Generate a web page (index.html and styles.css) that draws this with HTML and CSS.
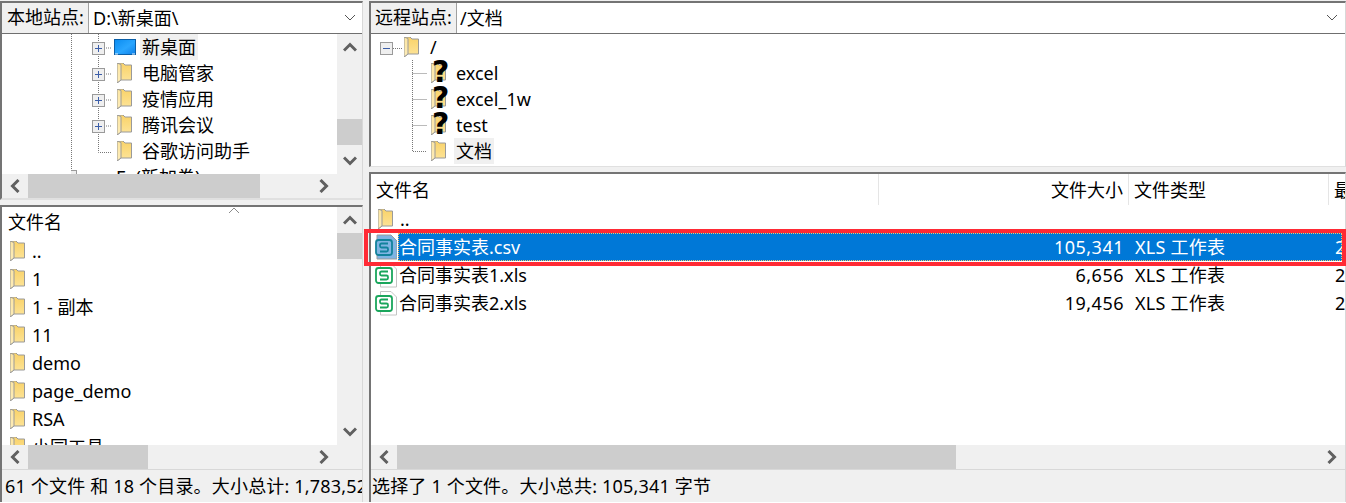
FILE: index.html
```html
<!DOCTYPE html>
<html lang="zh-CN">
  <head>
    <meta charset="UTF-8" />
    <title>FileZilla</title>
    <link rel="stylesheet" href="styles.css">
  </head>
  <body>
    <svg class="sprite" aria-hidden="true">
      <defs>
        <linearGradient id="folder-fill" x1="0" y1="0" x2="0" y2="1">
          <stop offset="0" stop-color="#f9d268" />
          <stop offset="1" stop-color="#fde59c" />
        </linearGradient>
        <linearGradient id="folder-front" x1="0" y1="0" x2="0" y2="1">
          <stop offset="0" stop-color="#fde6a2" />
          <stop offset="1" stop-color="#fdecb8" />
        </linearGradient>
        <linearGradient id="desk-fill" x1="0" y1="0" x2="1" y2="1">
          <stop offset="0" stop-color="#0a8cf0" />
          <stop offset="0.55" stop-color="#2aa6ff" />
          <stop offset="1" stop-color="#0f80e8" />
        </linearGradient>
        <symbol id="folder" viewBox="0 0 15 20">
          <path d="M0 0H6L8 2H14.500V17H4L0 20Z" fill="url(#folder-fill)" />
          <path d="M0 0L4 1.500V17L0 20Z" fill="url(#folder-front)" />
        </symbol>
        <symbol id="desktop" viewBox="0 0 22 16">
          <rect x="0.500" y="0.500" width="21" height="15" fill="url(#desk-fill)" stroke="#0b5fa8" />
          <path d="M1 15H4M18 15H21" stroke="#dff1ff" />
        </symbol>
        <symbol id="chevron" viewBox="0 0 14 10">
          <polyline points="1,8.500 7,2.500 13,8.500" fill="none" stroke="#606060" stroke-width="3" />
        </symbol>
        <symbol id="sheet" viewBox="0 0 22 26">
          <path d="M5.500 1.500H16L21.500 7V25H5.500Z" fill="#fff" stroke="#c4c4c4" />
          <rect x="1" y="6" width="16" height="15" rx="2.500" fill="#fff" stroke="#1aa65c" stroke-width="1.800" />
          <path d="M13 9.500H6.500Q5 9.500 5 11V12Q5 13.500 6.500 13.500H11.500Q13 13.500 13 15V16Q13 17.500 11.500 17.500H5" fill="none" stroke="#1aa65c" stroke-width="1.800" />
        </symbol>
        <symbol id="sheet-selected" viewBox="0 0 22 26">
          <path d="M2 1H16L22 7V25H2Z" fill="#7fb4e2" />
          <rect x="1" y="6" width="16" height="15" rx="2.500" fill="#7fb4e2" stroke="#12829c" stroke-width="1.800" />
          <path d="M13 9.500H6.500Q5 9.500 5 11V12Q5 13.500 6.500 13.500H11.500Q13 13.500 13 15V16Q13 17.500 11.500 17.500H5" fill="none" stroke="#12829c" stroke-width="1.800" />
        </symbol>
        <symbol id="twig-open" viewBox="0 0 41 26">
          <path class="dots" d="M0.500 0V26M27.500 0V26M33 14H41" />
          <rect class="box" x="21.500" y="8.500" width="12" height="12" />
          <path class="cross" d="M24 14.500H31M27.500 11V18" />
        </symbol>
        <symbol id="twig-last" viewBox="0 0 41 26">
          <path class="dots" d="M0.500 0V26M27.500 0V14.500H41" />
        </symbol>
        <symbol id="twig-drive" viewBox="0 0 41 26">
          <path class="dots" d="M0.500 0V6" />
          <rect class="box" x="-6.500" y="6.500" width="12" height="12" />
        </symbol>
        <symbol id="twig-root" viewBox="0 0 32 26">
          <rect class="box" x="8.500" y="8.500" width="12" height="12" />
          <path class="cross" d="M11 14.500H18" />
          <path class="dots" d="M21 14.500H31" />
        </symbol>
        <symbol id="twig-child" viewBox="0 0 15 26">
          <path class="dots" d="M0.500 0V26M0.500 13.500H15" />
        </symbol>
        <symbol id="twig-end" viewBox="0 0 15 26">
          <path class="dots" d="M0.500 0V13.500H15" />
        </symbol>
      </defs>
    </svg>

    <div class="app">
      <div class="pane pane-left">
        <div class="box box-tree">
          <div class="site-bar">
            <span class="site-label">本地站点:</span>
            <span class="site-path">D:\新桌面\</span>
            <svg class="combo-arrow" viewBox="0 0 12 8"><polyline points="1,1 6,6 11,1" /></svg>
          </div>
          <div class="scroll-view">
            <div class="content tree tree-local">
              <div class="tree-row">
                <svg class="twig"><use href="#twig-open" /></svg>
                <svg class="desk-icon"><use href="#desktop" /></svg>
                <span class="tree-label current">新桌面</span>
              </div>
              <div class="tree-row">
                <svg class="twig"><use href="#twig-open" /></svg>
                <svg class="folder"><use href="#folder" /></svg>
                <span class="tree-label">电脑管家</span>
              </div>
              <div class="tree-row">
                <svg class="twig"><use href="#twig-open" /></svg>
                <svg class="folder"><use href="#folder" /></svg>
                <span class="tree-label">疫情应用</span>
              </div>
              <div class="tree-row">
                <svg class="twig"><use href="#twig-open" /></svg>
                <svg class="folder"><use href="#folder" /></svg>
                <span class="tree-label">腾讯会议</span>
              </div>
              <div class="tree-row">
                <svg class="twig"><use href="#twig-last" /></svg>
                <svg class="folder"><use href="#folder" /></svg>
                <span class="tree-label">谷歌访问助手</span>
              </div>
              <div class="tree-row">
                <svg class="twig"><use href="#twig-drive" /></svg>
                <span class="drive-label">E: (新加卷)</span>
              </div>
            </div>
            <div class="vbar">
              <span class="sb-btn"><svg class="chev"><use href="#chevron" /></svg></span>
              <span class="vtrack vtrack-tree"><span class="vthumb"></span></span>
              <span class="sb-btn"><svg class="chev down"><use href="#chevron" /></svg></span>
            </div>
            <div class="hbar">
              <span class="sb-btn"><svg class="chev left"><use href="#chevron" /></svg></span>
              <span class="hthumb hthumb-tree"></span>
              <span class="hspace"></span>
              <span class="sb-btn"><svg class="chev right"><use href="#chevron" /></svg></span>
            </div>
            <div class="corner"></div>
          </div>
        </div>

        <div class="box box-list">
          <div class="scroll-view">
            <div class="content">
              <div class="local-head">
                文件名
                <svg class="sort-mark" viewBox="0 0 12 7"><polyline points="1,6 6,1 11,6" /></svg>
              </div>
              <div class="local-row"><svg class="folder"><use href="#folder" /></svg><span>..</span></div>
              <div class="local-row"><svg class="folder"><use href="#folder" /></svg><span>1</span></div>
              <div class="local-row"><svg class="folder"><use href="#folder" /></svg><span>1 - 副本</span></div>
              <div class="local-row"><svg class="folder"><use href="#folder" /></svg><span>11</span></div>
              <div class="local-row"><svg class="folder"><use href="#folder" /></svg><span>demo</span></div>
              <div class="local-row"><svg class="folder"><use href="#folder" /></svg><span>page_demo</span></div>
              <div class="local-row"><svg class="folder"><use href="#folder" /></svg><span>RSA</span></div>
              <div class="local-row"><svg class="folder"><use href="#folder" /></svg><span>小园工具</span></div>
            </div>
            <div class="vbar">
              <span class="sb-btn"><svg class="chev"><use href="#chevron" /></svg></span>
              <span class="vtrack"><span class="vthumb"></span></span>
              <span class="sb-btn"><svg class="chev down"><use href="#chevron" /></svg></span>
            </div>
            <div class="hbar">
              <span class="sb-btn"><svg class="chev left"><use href="#chevron" /></svg></span>
              <span class="hthumb hthumb-list"></span>
              <span class="hspace"></span>
              <span class="sb-btn"><svg class="chev right"><use href="#chevron" /></svg></span>
            </div>
            <div class="corner"></div>
          </div>
          <div class="status">61 个文件 和 18 个目录。大小总计: 1,783,524 字节</div>
        </div>
      </div>

      <div class="pane pane-right">
        <div class="box box-tree">
          <div class="site-bar">
            <span class="site-label">远程站点:</span>
            <span class="site-path">/文档</span>
            <svg class="combo-arrow" viewBox="0 0 12 8"><polyline points="1,1 6,6 11,1" /></svg>
          </div>
          <div class="tree tree-remote">
            <div class="tree-row">
              <svg class="twig-root"><use href="#twig-root" /></svg>
              <svg class="folder"><use href="#folder" /></svg>
              <span class="root-name">/</span>
            </div>
            <div class="tree-row child">
              <svg class="twig-child"><use href="#twig-child" /></svg>
              <span class="unknown"><svg class="folder"><use href="#folder" /></svg><b class="mark-q">?</b></span>
              <span class="tree-label">excel</span>
            </div>
            <div class="tree-row child">
              <svg class="twig-child"><use href="#twig-child" /></svg>
              <span class="unknown"><svg class="folder"><use href="#folder" /></svg><b class="mark-q">?</b></span>
              <span class="tree-label">excel_1w</span>
            </div>
            <div class="tree-row child">
              <svg class="twig-child"><use href="#twig-child" /></svg>
              <span class="unknown"><svg class="folder"><use href="#folder" /></svg><b class="mark-q">?</b></span>
              <span class="tree-label">test</span>
            </div>
            <div class="tree-row child">
              <svg class="twig-child"><use href="#twig-end" /></svg>
              <span class="unknown"><svg class="folder"><use href="#folder" /></svg></span>
              <span class="tree-label current">文档</span>
            </div>
          </div>
        </div>

        <div class="box box-list">
          <div class="remote-list">
            <div class="remote-head">
              <span class="col">文件名</span>
              <span class="col num">文件大小</span>
              <span class="col">文件类型</span>
              <span class="col last">最</span>
            </div>
            <div class="file-row">
              <span class="col name"><svg class="folder"><use href="#folder" /></svg><span>..</span></span>
            </div>
            <div class="file-row selected">
              <span class="col name"><svg class="sheet"><use href="#sheet-selected" /></svg><span class="file-name">合同事实表.csv</span></span>
              <span class="col num">105,341</span>
              <span class="col kind">XLS 工作表</span>
              <span class="col last">2</span>
            </div>
            <div class="file-row">
              <span class="col name"><svg class="sheet"><use href="#sheet" /></svg><span class="file-name">合同事实表1.xls</span></span>
              <span class="col num">6,656</span>
              <span class="col kind">XLS 工作表</span>
              <span class="col last">2</span>
            </div>
            <div class="file-row">
              <span class="col name"><svg class="sheet"><use href="#sheet" /></svg><span class="file-name">合同事实表2.xls</span></span>
              <span class="col num">19,456</span>
              <span class="col kind">XLS 工作表</span>
              <span class="col last">2</span>
            </div>
          </div>
          <div class="hbar">
            <span class="sb-btn"><svg class="chev left"><use href="#chevron" /></svg></span>
            <span class="hthumb hthumb-remote"></span>
            <span class="hspace"></span>
            <span class="sb-btn"><svg class="chev right"><use href="#chevron" /></svg></span>
          </div>
          <div class="status">选择了 1 个文件。大小总共: 105,341 字节</div>
        </div>
      </div>

      <div class="annotation"></div>
    </div>
  </body>
</html>
```

FILE: styles.css
```css
* {
  box-sizing: border-box;
}
html,
body {
  margin: 0;
  height: 100%;
}
body {
  background: #fff;
  color: #000;
  font-family: "Noto Sans", "Noto Sans CJK SC", sans-serif;
  font-size: 18px;
  line-height: 26px;
  overflow: hidden;
}
svg {
  display: block;
  flex: none;
}
.sprite {
  position: absolute;
  width: 0;
  height: 0;
}
.dots {
  fill: none;
  stroke: #777;
  stroke-dasharray: 1 1;
}
.box {
  fill: #efefef;
  stroke: #9a9a9a;
}
.cross {
  fill: none;
  stroke: #3c5ea8;
}

.app {
  position: relative;
  display: flex;
  height: 502px;
  padding-top: 1px;
  background: #f0f0f0;
}
.pane {
  display: flex;
  flex-direction: column;
}
.pane-left {
  width: 363px;
  margin-right: 6px;
}
.pane-right {
  flex: 1;
  min-width: 0;
}

/* panels */
.box-tree,
.box-list {
  display: flex;
  flex-direction: column;
  border-top: 2px solid #747474;
  border-left: 2px solid #747474;
  border-right: 1px solid #d8d8d8;
  overflow: hidden;
}
.pane-left .box-tree {
  height: 199px;
  border-bottom: 2px solid #e0e0e0;
}
.pane-left .box-list {
  height: 297px;
  margin-top: 5px;
}
.pane-right .box-tree {
  height: 166px;
  border-bottom: 1px solid #e0e0e0;
}
.pane-right .box-list {
  height: 330px;
  margin-top: 5px;
}

/* site bar */
.site-bar {
  display: flex;
  align-items: center;
  height: 31px;
  flex: none;
  background: #fff;
  border-bottom: 1px solid #6f6f6f;
}
.site-label {
  width: 87px;
  height: 100%;
  padding-left: 5px;
  line-height: 29px;
  background: #f0f0f0;
  border-right: 1px solid #a0a0a0;
}
.site-path {
  flex: 1;
  padding-left: 4px;
  line-height: 29px;
}
.pane-right .site-label {
  width: 86px;
  padding-left: 4px;
}
.pane-right .site-path {
  padding-left: 3px;
}
.combo-arrow {
  width: 12px;
  height: 8px;
  margin-right: 6px;
  fill: none;
  stroke: #555;
}
.pane-right .combo-arrow {
  margin-right: 7px;
}

/* scrolling */
.scroll-view {
  flex: 1;
  min-height: 0;
  display: grid;
  grid-template-columns: 1fr 25px;
  grid-template-rows: 1fr 24px;
}
.content {
  background: #fff;
  overflow: hidden;
  min-width: 0;
}
.vbar {
  display: flex;
  flex-direction: column;
}
.vbar .sb-btn {
  height: 26px;
}
.vtrack {
  flex: 1;
}
.vtrack-tree {
  padding-top: 59px;
}
.vthumb {
  display: block;
  height: 26px;
  background: #cdcdcd;
}
.hbar {
  display: flex;
  height: 24px;
  flex: none;
  background: #f0f0f0;
}
.hbar .sb-btn {
  width: 26px;
}
.hspace {
  flex: 1;
}
.hthumb {
  background: #cdcdcd;
}
.hthumb-tree {
  width: 232px;
}
.hthumb-list {
  width: 120px;
}
.hthumb-remote {
  width: 559px;
}
.sb-btn {
  display: flex;
  align-items: center;
  justify-content: center;
  flex: none;
}
.chev {
  width: 14px;
  height: 10px;
}
.chev.down {
  transform: rotate(180deg);
}
.chev.left {
  transform: rotate(-90deg);
}
.chev.right {
  transform: rotate(90deg);
}

/* trees */
.tree {
  flex: 1;
  background: #fff;
  overflow: hidden;
}
.tree-row {
  display: flex;
  align-items: center;
  height: 26px;
  white-space: nowrap;
}
.tree-local .tree-row {
  padding-left: 69px;
}
.twig {
  width: 41px;
  height: 26px;
}
.folder {
  width: 15px;
  height: 20px;
}
.tree-local .folder {
  margin-left: 5px;
}
.desk-icon {
  width: 22px;
  height: 16px;
  margin: 0 -4px 0 2px;
}
.drive-label {
  margin-left: 4px;
}
.tree-label {
  margin-left: 8px;
  padding: 0 2px;
  height: 26px;
}
.current {
  background: #f0f0f0;
}
.tree-remote .twig-root {
  width: 32px;
  height: 26px;
  margin-left: 1px;
}
.tree-remote .folder {
  margin-left: 0;
}
.root-name {
  margin-left: 11px;
}
.child {
  padding-left: 41px;
}
.twig-child {
  width: 15px;
  height: 26px;
}
.unknown {
  position: relative;
  margin-left: 4px;
}
.mark-q {
  position: absolute;
  left: 1px;
  top: -7px;
  width: 15px;
  text-align: center;
  font: bold 30px/32px "DejaVu Sans", sans-serif;
}

/* local list */
.local-head {
  position: relative;
  height: 30px;
  padding-left: 6px;
  line-height: 30px;
}
.sort-mark {
  position: absolute;
  left: 226px;
  top: 0;
  width: 12px;
  height: 7px;
  fill: none;
  stroke: #8a8a8a;
}
.local-row {
  display: flex;
  align-items: center;
  height: 28px;
  padding-left: 8px;
  white-space: nowrap;
}
.local-row span {
  margin-left: 7px;
}

/* remote list */
.remote-list {
  flex: 1;
  min-height: 0;
  background: #fff;
  overflow: hidden;
}
.remote-head,
.file-row {
  display: grid;
  grid-template-columns: 508px 250px 200px 1fr;
  white-space: nowrap;
}
.remote-head {
  height: 31px;
  line-height: 32px;
}
.remote-head .col {
  padding-left: 5px;
  border-right: 1px solid #e5e5e5;
}
.remote-head .num {
  padding-right: 5px;
  text-align: right;
}
.remote-head .last {
  border-right: none;
}
.file-row {
  position: relative;
  height: 28px;
  line-height: 28px;
}
.col {
  overflow: hidden;
}
.file-row .col {
  padding-left: 6px;
}
.file-row .num {
  padding: 0 5px 0 0;
  text-align: right;
  letter-spacing: 0.5px;
}
.file-row .kind {
  letter-spacing: 0.25px;
}
.file-row .name {
  display: flex;
  align-items: center;
  padding-left: 4px;
  background: #fff;
  color: #000;
}
.file-row .name > .folder {
  margin-left: 3px;
}
.file-row .name > .folder + span {
  margin-left: 7px;
}
.sheet {
  width: 22px;
  height: 26px;
}
.file-name {
  margin-left: 1px;
  padding-left: 1px;
  flex: 1;
}
.selected {
  background: #0078d7;
  color: #fff;
}
.selected .file-name {
  background: #0078d7;
  color: #fff;
}
/* focus rectangle, over the blue part of the row */
.selected::after {
  content: "";
  position: absolute;
  top: 0;
  right: 3px;
  bottom: 0;
  left: 27px;
  border: 1px dotted #f5c26b;
}

/* status */
.status {
  flex: none;
  height: 33px;
  padding-left: 3px;
  line-height: 33px;
  letter-spacing: 0.18px;
  white-space: nowrap;
  overflow: hidden;
  background: #f0f0f0;
  border-top: 1px solid #d8d8d8;
}
.pane-right .status {
  padding-left: 1px;
}

/* red box marking the selected row */
.annotation {
  position: absolute;
  left: 364px;
  top: 229px;
  width: 982px;
  height: 37px;
  border: 4px solid #ff2a35;
}
```
